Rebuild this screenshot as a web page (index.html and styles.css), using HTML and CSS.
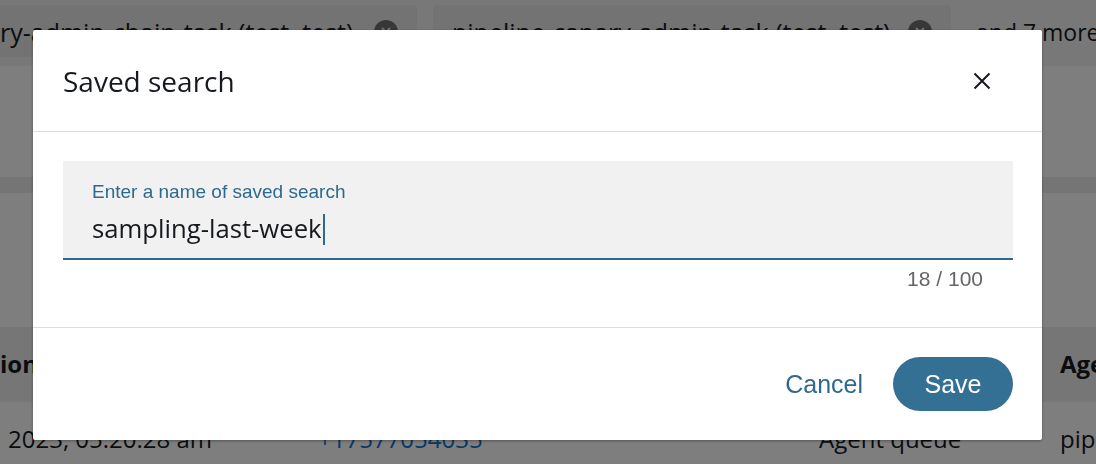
FILE: index.html
```html
<!DOCTYPE html>
<html lang="en">
  <head>
    <meta charset="UTF-8" />
    <meta name="viewport" content="width=device-width, initial-scale=1.0" />
    <title>Saved search</title>
    <link rel="stylesheet" href="styles.css">
  </head>
  <body>
    <div class="page">
      <div class="filter-bar">
        <div class="chip chip-first">
          <span>ry-admin-chain-task (test, test)</span>
          <svg class="chip-x" width="24" height="24" viewBox="0 0 24 24">
            <circle cx="12" cy="12" r="12" fill="#6e6e6e" />
            <path d="M8 8 L16 16 M16 8 L8 16" stroke="#e6e6e6" stroke-width="2" />
          </svg>
        </div>
        <div class="chip chip-second">
          <span>pipeline-canary-admin-task (test, test)</span>
          <svg class="chip-x" width="24" height="24" viewBox="0 0 24 24">
            <circle cx="12" cy="12" r="12" fill="#6e6e6e" />
            <path d="M8 8 L16 16 M16 8 L8 16" stroke="#e6e6e6" stroke-width="2" />
          </svg>
        </div>
        <span class="more">and 7 more</span>
      </div>
      <div class="blank-top"></div>
      <div class="band"></div>
      <div class="blank-mid"></div>

      <div class="table">
        <div class="row head">
          <div class="cell c1 first-head">ion</div>
          <div class="cell c2"></div>
          <div class="cell c3"></div>
          <div class="cell c4">Age</div>
        </div>
        <div class="row">
          <div class="cell c1">2023, 05:20:28 am</div>
          <div class="cell c2 link">+17577054035</div>
          <div class="cell c3">Agent queue</div>
          <div class="cell c4">pip</div>
        </div>
      </div>
    </div>

    <!-- modal -->
    <div class="overlay">
      <div class="modal">
        <div class="modal-header">
          <h2 class="modal-title">Saved search</h2>
          <button class="close-btn" aria-label="Close">
            <svg width="18" height="18" viewBox="0 0 18 18">
              <path d="M1.5 1.5 L16.5 16.5 M16.5 1.5 L1.5 16.5" stroke="#16191f" stroke-width="2" fill="none" />
            </svg>
          </button>
        </div>

        <div class="modal-body">
          <div class="field">
            <label class="field-label" for="">Enter a name of saved search</label>
            <div class="field-value"><span>sampling-last-week</span><span class="caret"></span></div>
          </div>
          <div class="counter">18 / 100</div>
        </div>

        <div class="modal-footer">
          <button class="btn-link">Cancel</button>
          <button class="btn btn-save">Save</button>
        </div>
      </div>
    </div>
  </body>
</html>
```

FILE: styles.css
```css
body {
  margin: 0;
  width: 1096px;
  height: 464px;
  overflow: hidden;
  background-color: #fdfdfd;
  font-family: "Open Sans", "Noto Sans", sans-serif;
  color: #16191f;
}
.page {
  display: flex;
  flex-direction: column;
}

/* filter chips behind the modal */
.filter-bar {
  height: 66px;
  box-sizing: border-box;
  padding-top: 5px;
  background-color: #f1f1f1;
  display: flex;
  align-items: flex-start;
  gap: 16px;
  white-space: nowrap;
}
.chip {
  height: 52px;
  box-sizing: border-box;
  flex-shrink: 0;
  display: flex;
  align-items: center;
  justify-content: space-between;
  padding: 2px 19px 0 19px;
  background-color: #e6e6e6;
  border-radius: 4px;
  font-size: 25px;
}
.chip-first {
  margin-left: -19px;
  width: 436px;
}
.chip-second {
  width: 518px;
}
.chip-x {
  flex-shrink: 0;
}
.more {
  flex-shrink: 0;
  padding-top: 11px;
  margin-left: 9px;
  font-size: 23px;
}

.blank-top {
  height: 111px;
}
.band {
  height: 16px;
  background-color: #ebebeb;
}
.blank-mid {
  height: 134px;
}

/* table */
.row {
  display: flex;
  white-space: nowrap;
}
.row.head {
  height: 75px;
  align-items: center;
  background-color: #ececec;
  font-weight: 700;
  padding-bottom: 3px;
  box-sizing: border-box;
}
.cell {
  flex-shrink: 0;
  font-size: 24px;
  box-sizing: border-box;
  padding-left: 8px;
}
.c1 { width: 310px; }
.c2 { width: 500px; }
.c3 { width: 242px; padding-left: 9px; }
.c4 { width: 200px; }
.first-head {
  padding-left: 0;
}
.row:not(.head) {
  padding-top: 20px;
}
.link {
  color: #0972d3;
}

/* overlay + modal */
.overlay {
  position: fixed;
  inset: 0;
  background-color: rgba(0, 0, 0, 0.5);
  padding: 30px 0 0 33px;
}
.modal {
  width: 1009px;
  height: 410px;
  background-color: #fff;
  border-radius: 2px;
  box-shadow: 0 1px 3px rgba(0, 0, 0, 0.35);
  display: flex;
  flex-direction: column;
}
.modal-header {
  height: 102px;
  box-sizing: border-box;
  display: flex;
  align-items: center;
  justify-content: space-between;
  padding: 0 51px 0 30px;
  border-bottom: 1px solid #dddddd;
}
.modal-title {
  margin: 0;
  font-size: 28px;
  font-weight: 400;
  color: #16191f;
}
.close-btn {
  border: none;
  background: none;
  padding: 0;
  width: 18px;
  height: 18px;
  cursor: pointer;
}
.modal-body {
  height: 196px;
  box-sizing: border-box;
  padding: 29px 29px 0 30px;
  border-bottom: 1px solid #dddddd;
}
.field {
  height: 99px;
  box-sizing: border-box;
  background-color: #f1f1f1;
  border-bottom: 2px solid #2f6a8e;
  padding: 19px 29px 0 29px;
  display: flex;
  flex-direction: column;
}
.field-label {
  font-family: "Liberation Sans", Arial, sans-serif;
  font-size: 19px;
  color: #2f6a8e;
  line-height: 24px;
}
.field-value {
  margin-top: 8px;
  font-size: 25.7px;
  line-height: 34px;
  color: #16191f;
  display: flex;
  align-items: center;
}
.caret {
  width: 2px;
  height: 31px;
  margin-left: 1px;
  background-color: #2f6a8e;
}
.counter {
  font-family: "Liberation Sans", Arial, sans-serif;
  font-size: 21px;
  color: #666;
  text-align: right;
  padding: 7px 30px 0 0;
}
.modal-footer {
  flex: 1;
  display: flex;
  align-items: center;
  justify-content: flex-end;
  gap: 30px;
  padding: 0 29px 0 0;
}
.btn-link {
  border: none;
  background: none;
  padding: 0;
  font-family: "Liberation Sans", Arial, sans-serif;
  font-size: 25px;
  color: #2f6a8e;
  cursor: pointer;
}
.btn {
  border: none;
  cursor: pointer;
  font-family: "Liberation Sans", Arial, sans-serif;
}
.btn-save {
  width: 120px;
  height: 54px;
  border-radius: 27px;
  background-color: #346f94;
  color: #fff;
  font-size: 25px;
}
```
